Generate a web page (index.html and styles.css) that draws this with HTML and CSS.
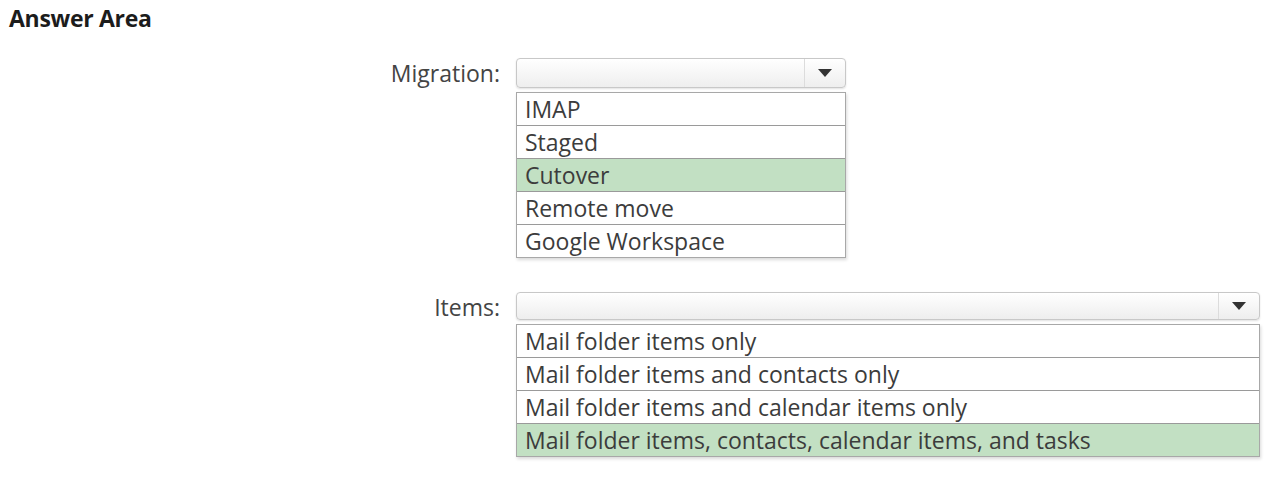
FILE: index.html
```html
<!DOCTYPE html>
<html lang="en">
<head>
    <meta charset="UTF-8">
    <title>Answer Area</title>
    <link rel="stylesheet" href="styles.css">
</head>
<body>
    <h1 class="title">Answer Area</h1>
    <div class="question">
        <div class="label">Migration:</div>
        <div class="field field-migration">
            <div class="select">
                <span class="select-value"></span>
                <span class="select-arrow"><svg width="14" height="8" viewBox="0 0 14 8"><path d="M0 0 H14 L7 8 Z" fill="#333"/></svg></span>
            </div>
            <ul class="options">
                <li>IMAP</li>
                <li>Staged</li>
                <li class="selected">Cutover</li>
                <li>Remote move</li>
                <li>Google Workspace</li>
            </ul>
        </div>
    </div>
    <div class="question">
        <div class="label">Items:</div>
        <div class="field field-items">
            <div class="select">
                <span class="select-value"></span>
                <span class="select-arrow"><svg width="14" height="8" viewBox="0 0 14 8"><path d="M0 0 H14 L7 8 Z" fill="#333"/></svg></span>
            </div>
            <ul class="options">
                <li>Mail folder items only</li>
                <li>Mail folder items and contacts only</li>
                <li>Mail folder items and calendar items only</li>
                <li class="selected">Mail folder items, contacts, calendar items, and tasks</li>
            </ul>
        </div>
    </div>
</body>
</html>
```
FILE: styles.css
```css
body {
    margin: 0;
    padding: 3px 0 0 9px;
    background-color: #fff;
    color: #3a3a3a;
    font-family: 'Open Sans', 'Noto Sans', sans-serif;
}

.title {
    margin: 0 0 25px 0;
    font-size: 23px;
    font-weight: 700;
    color: #1c1c1c;
    line-height: 30px;
    letter-spacing: -0.3px;
}

.question {
    display: flex;
    align-items: flex-start;
    gap: 16px;
    margin-bottom: 34px;
}

.label {
    width: 491px;
    text-align: right;
    font-size: 23px;
    line-height: 30px;
    color: #444;
}

.field-migration {
    width: 330px;
}

.field-items {
    width: 744px;
}

.select {
    display: flex;
    height: 28px;
    border: 1px solid #c8c8c8;
    border-radius: 4px;
    background: linear-gradient(#ffffff, #eeeeee);
    box-shadow: 0 1px 2px rgba(0, 0, 0, 0.12);
}

.field-items .select {
    height: 26px;
}

.select-value {
    flex: 1;
}

.select-arrow {
    width: 40px;
    display: flex;
    align-items: center;
    justify-content: center;
    border-left: 1px solid #dcdcdc;
}

.options {
    list-style: none;
    margin: 4px 0 0 0;
    padding: 0;
    border: 1px solid #a8a8a8;
    box-shadow: 1px 2px 3px rgba(0, 0, 0, 0.15);
    background-color: #fff;
}

.options li {
    height: 32px;
    line-height: 32px;
    padding-left: 8px;
    font-size: 23px;
    color: #3c3c3c;
    border-top: 1px solid #9a9a9a;
    white-space: nowrap;
}

.options li:first-child {
    border-top: none;
}

.options .selected {
    background-color: #c2e0c3;
}
```
